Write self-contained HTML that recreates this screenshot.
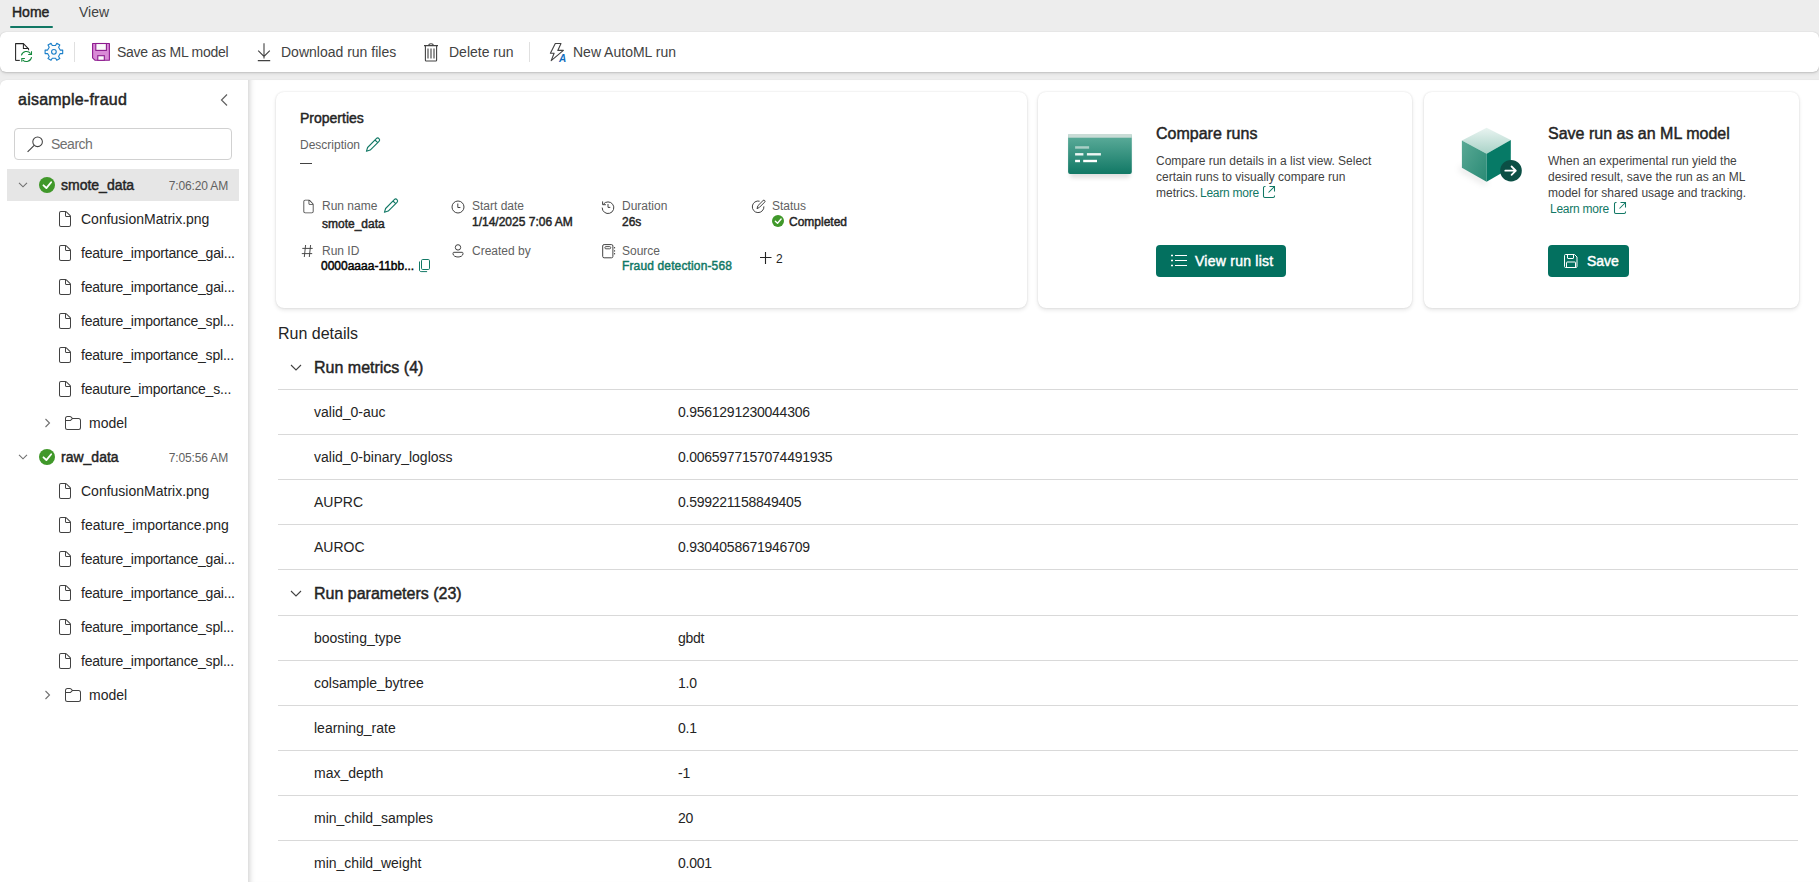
<!DOCTYPE html>
<html><head><meta charset="utf-8"><style>*{box-sizing:border-box;margin:0;padding:0}
html,body{width:1819px;height:882px;overflow:hidden}
body{background:#ededed;font-family:"Liberation Sans",sans-serif;color:#242424;position:relative}
.a{position:absolute;white-space:nowrap}
svg.a{overflow:visible}
#toolbar{position:absolute;left:0;top:32px;width:1819px;height:40px;background:#fff;border-radius:6px;box-shadow:0 0 1px rgba(0,0,0,.22),0 1px 2px rgba(0,0,0,.12),0 2px 4px rgba(0,0,0,.06)}
#panel{position:absolute;left:0;top:80px;width:1819px;height:802px;background:#fff;border-top-left-radius:6px;box-shadow:0 0 1px rgba(0,0,0,.16)}
#mainbg{position:absolute;left:248px;top:80px;width:1571px;height:802px;background:#fff;box-shadow:inset 7px 0 6px -6px rgba(0,0,0,.22)}
</style></head><body>
<div class="a" style="left:12px;top:5px;font-size:14px;line-height:14px;font-weight:normal;color:#242424;;-webkit-text-stroke:0.45px #242424">Home</div>
<div class="a" style="left:79px;top:5px;font-size:14px;line-height:14px;font-weight:normal;color:#424242;">View</div>
<div class="a" style="left:10px;top:26px;width:43px;height:2px;background:#117865;border-radius:1px"></div>
<div id="toolbar"></div>
<div class="a" style="left:117px;top:45px;font-size:14px;line-height:14px;font-weight:normal;color:#424242;letter-spacing:-0.25px">Save as ML model</div>
<div class="a" style="left:281px;top:45px;font-size:14px;line-height:14px;font-weight:normal;color:#424242;">Download run files</div>
<div class="a" style="left:449px;top:45px;font-size:14px;line-height:14px;font-weight:normal;color:#424242;">Delete run</div>
<div class="a" style="left:573px;top:45px;font-size:14px;line-height:14px;font-weight:normal;color:#424242;">New AutoML run</div>
<div class="a" style="left:74px;top:42px;width:1px;height:20px;background:#e0e0e0"></div>
<div class="a" style="left:529px;top:42px;width:1px;height:20px;background:#e0e0e0"></div>
<svg class="a" style="left:12px;top:40px" width="24" height="24" viewBox="0 0 24 24"><path d="M3.6 20.4V3.6h7.8l5.2 5.2v1.5" fill="none" stroke="#242424" stroke-width="1.05" stroke-linejoin="round"/><path d="M3.6 20.4h4.2" fill="none" stroke="#242424" stroke-width="1.05"/><path d="M11.4 3.6v4.8h5.2" fill="none" stroke="#242424" stroke-width="1.05" stroke-linejoin="round"/><path d="M9.4 15.4A5.2 5.2 0 0 1 18.6 13.6" fill="none" stroke="#14883c" stroke-width="1.05"/><path d="M19.5 11.2v3.3h-3.3" fill="none" stroke="#14883c" stroke-width="1.05"/><path d="M19.6 17.2A5.2 5.2 0 0 1 10.6 19.8" fill="none" stroke="#14883c" stroke-width="1.05"/><path d="M9.8 21.8v-3.3h3.1" fill="none" stroke="#14883c" stroke-width="1.05"/></svg>
<svg class="a" style="left:40px;top:40px" width="24" height="24" viewBox="0 0 24 24"><path d="M20.20 10.10 L22.70 10.10 L22.70 13.60 L20.20 13.60 L18.57 16.43 L19.82 18.60 L16.78 20.35 L15.53 18.18 L12.27 18.18 L11.02 20.35 L7.98 18.60 L9.23 16.43 L7.60 13.60 L5.10 13.60 L5.10 10.10 L7.60 10.10 L9.23 7.27 L7.98 5.10 L11.02 3.35 L12.27 5.52 L15.53 5.52 L16.78 3.35 L19.82 5.10 L18.57 7.27Z" fill="#fbfbfb" stroke="#1b7fc9" stroke-width="1.1" stroke-linejoin="round"/><circle cx="13.9" cy="11.85" r="2.35" fill="none" stroke="#1b7fc9" stroke-width="1.1"/></svg>
<svg class="a" style="left:88px;top:40px" width="24" height="24" viewBox="0 0 24 24"><path d="M4.6 3.5h16.8v16.8H7.1L4.6 17.8z" fill="#d98ad6" stroke="#8c1a8e" stroke-width="1.1" stroke-linejoin="round"/><rect x="7.8" y="3.5" width="10.6" height="6.9" fill="#fafafa" stroke="#8c1a8e" stroke-width="1.1"/><rect x="9.8" y="15.7" width="6.5" height="4.6" fill="#fafafa" stroke="#8c1a8e" stroke-width="1.1"/></svg>
<svg class="a" style="left:256px;top:42px" width="16" height="20" viewBox="0 0 16 20"><path d="M8 1.2v15.3M2.2 8.7l5.8 5.8 5.8-5.8M1.8 18.6h12.4" fill="none" stroke="#424242" stroke-width="1.1"/></svg>
<svg class="a" style="left:423px;top:42px" width="16" height="20" viewBox="0 0 16 20"><path d="M1 3.6h14M5.8 3.4c0-2.2 4.4-2.2 4.4 0M2.4 3.6v14.6c0 .5.3.8.8.8h9.6c.5 0 .8-.3.8-.8V3.6M5 6.5v10M8 6.5v10M11 6.5v10" fill="none" stroke="#424242" stroke-width="1.1"/></svg>
<svg class="a" style="left:548px;top:42px" width="20" height="22" viewBox="0 0 20 22"><path d="M7.3 1.5H13L9.8 8.4h5.6L3.2 18.6l2.9-7.3H2.4z" fill="none" stroke="#424242" stroke-width="1.1" stroke-linejoin="round"/><text x="11" y="20" font-family="Liberation Sans" font-weight="bold" font-style="italic" font-size="10" fill="#0f6cbd">A</text></svg>
<div id="panel"></div><div id="mainbg"></div>
<div class="a" style="left:18px;top:92px;font-size:16px;line-height:16px;font-weight:normal;color:#242424;;-webkit-text-stroke:0.45px #242424;letter-spacing:0.23px">aisample-fraud</div>
<svg class="a" style="left:218px;top:93px" width="12" height="14" viewBox="0 0 12 14"><path d="M9 1.5L3.5 7L9 12.5" fill="none" stroke="#616161" stroke-width="1.2"/></svg>
<div class="a" style="left:14px;top:128px;width:218px;height:32px;border:1px solid #d1d1d1;border-radius:4px;background:#fff"></div>
<svg class="a" style="left:26px;top:135px" width="18" height="18" viewBox="0 0 18 18"><circle cx="11.6" cy="6.8" r="4.8" fill="none" stroke="#424242" stroke-width="1.05"/><path d="M8.2 10.3L1.6 16.9" stroke="#424242" stroke-width="1.15"/></svg>
<div class="a" style="left:51px;top:137px;font-size:14px;line-height:14px;font-weight:normal;color:#707070;letter-spacing:-0.5px">Search</div>
<div class="a" style="left:7px;top:169px;width:232px;height:32px;background:#e6e6e6"></div>
<svg class="a" style="left:17px;top:181px" width="12" height="8" viewBox="0 0 12 8"><path d="M2 1.8L6 5.8L10 1.8" fill="none" stroke="#707070" stroke-width="1.1"/></svg>
<svg class="a" style="left:39px;top:177px" width="16" height="16" viewBox="0 0 16 16"><circle cx="8.0" cy="8.0" r="8.0" fill="#40982a"/><path d="M4.48 8.32l2.88 2.72 4.80-5.76" fill="none" stroke="#fff" stroke-width="1.84" stroke-linecap="round" stroke-linejoin="round"/></svg>
<div class="a" style="left:61px;top:178px;font-size:14px;line-height:14px;font-weight:normal;color:#242424;;-webkit-text-stroke:0.45px #242424">smote_data</div>
<div class="a" style="right:1591px;top:180px;font-size:12px;line-height:12px;color:#616161;letter-spacing:-0.15px">7:06:20 AM</div>
<svg class="a" style="left:55px;top:209px" width="20" height="20" viewBox="0 0 20 20"><path d="M6 2a2 2 0 0 0-2 2v12c0 1.1.9 2 2 2h8a2 2 0 0 0 2-2V7.41c0-.4-.16-.78-.44-1.06l-3.91-3.91A1.5 1.5 0 0 0 10.59 2H6ZM5 4a1 1 0 0 1 1-1h4v3.5c0 .83.67 1.5 1.5 1.5H15v8a1 1 0 0 1-1 1H6a1 1 0 0 1-1-1V4Zm9.8 3h-3.3a.5.5 0 0 1-.5-.5V3.2L14.8 7Z" fill="#424242"/></svg>
<div class="a" style="left:81px;top:212px;font-size:14px;line-height:14px;font-weight:normal;color:#242424;">ConfusionMatrix.png</div>
<svg class="a" style="left:55px;top:243px" width="20" height="20" viewBox="0 0 20 20"><path d="M6 2a2 2 0 0 0-2 2v12c0 1.1.9 2 2 2h8a2 2 0 0 0 2-2V7.41c0-.4-.16-.78-.44-1.06l-3.91-3.91A1.5 1.5 0 0 0 10.59 2H6ZM5 4a1 1 0 0 1 1-1h4v3.5c0 .83.67 1.5 1.5 1.5H15v8a1 1 0 0 1-1 1H6a1 1 0 0 1-1-1V4Zm9.8 3h-3.3a.5.5 0 0 1-.5-.5V3.2L14.8 7Z" fill="#424242"/></svg>
<div class="a" style="left:81px;top:246px;font-size:14px;line-height:14px;font-weight:normal;color:#242424;letter-spacing:-0.2px">feature_importance_gai...</div>
<svg class="a" style="left:55px;top:277px" width="20" height="20" viewBox="0 0 20 20"><path d="M6 2a2 2 0 0 0-2 2v12c0 1.1.9 2 2 2h8a2 2 0 0 0 2-2V7.41c0-.4-.16-.78-.44-1.06l-3.91-3.91A1.5 1.5 0 0 0 10.59 2H6ZM5 4a1 1 0 0 1 1-1h4v3.5c0 .83.67 1.5 1.5 1.5H15v8a1 1 0 0 1-1 1H6a1 1 0 0 1-1-1V4Zm9.8 3h-3.3a.5.5 0 0 1-.5-.5V3.2L14.8 7Z" fill="#424242"/></svg>
<div class="a" style="left:81px;top:280px;font-size:14px;line-height:14px;font-weight:normal;color:#242424;letter-spacing:-0.2px">feature_importance_gai...</div>
<svg class="a" style="left:55px;top:311px" width="20" height="20" viewBox="0 0 20 20"><path d="M6 2a2 2 0 0 0-2 2v12c0 1.1.9 2 2 2h8a2 2 0 0 0 2-2V7.41c0-.4-.16-.78-.44-1.06l-3.91-3.91A1.5 1.5 0 0 0 10.59 2H6ZM5 4a1 1 0 0 1 1-1h4v3.5c0 .83.67 1.5 1.5 1.5H15v8a1 1 0 0 1-1 1H6a1 1 0 0 1-1-1V4Zm9.8 3h-3.3a.5.5 0 0 1-.5-.5V3.2L14.8 7Z" fill="#424242"/></svg>
<div class="a" style="left:81px;top:314px;font-size:14px;line-height:14px;font-weight:normal;color:#242424;letter-spacing:-0.2px">feature_importance_spl...</div>
<svg class="a" style="left:55px;top:345px" width="20" height="20" viewBox="0 0 20 20"><path d="M6 2a2 2 0 0 0-2 2v12c0 1.1.9 2 2 2h8a2 2 0 0 0 2-2V7.41c0-.4-.16-.78-.44-1.06l-3.91-3.91A1.5 1.5 0 0 0 10.59 2H6ZM5 4a1 1 0 0 1 1-1h4v3.5c0 .83.67 1.5 1.5 1.5H15v8a1 1 0 0 1-1 1H6a1 1 0 0 1-1-1V4Zm9.8 3h-3.3a.5.5 0 0 1-.5-.5V3.2L14.8 7Z" fill="#424242"/></svg>
<div class="a" style="left:81px;top:348px;font-size:14px;line-height:14px;font-weight:normal;color:#242424;letter-spacing:-0.2px">feature_importance_spl...</div>
<svg class="a" style="left:55px;top:379px" width="20" height="20" viewBox="0 0 20 20"><path d="M6 2a2 2 0 0 0-2 2v12c0 1.1.9 2 2 2h8a2 2 0 0 0 2-2V7.41c0-.4-.16-.78-.44-1.06l-3.91-3.91A1.5 1.5 0 0 0 10.59 2H6ZM5 4a1 1 0 0 1 1-1h4v3.5c0 .83.67 1.5 1.5 1.5H15v8a1 1 0 0 1-1 1H6a1 1 0 0 1-1-1V4Zm9.8 3h-3.3a.5.5 0 0 1-.5-.5V3.2L14.8 7Z" fill="#424242"/></svg>
<div class="a" style="left:81px;top:382px;font-size:14px;line-height:14px;font-weight:normal;color:#242424;letter-spacing:-0.2px">feauture_importance_s...</div>
<svg class="a" style="left:42px;top:417px" width="8" height="12" viewBox="0 0 8 12"><path d="M3.5 2L7.5 6L3.5 10" fill="none" stroke="#707070" stroke-width="1.1"/></svg>
<svg class="a" style="left:63px;top:413px" width="20" height="20" viewBox="0 0 20 20"><path d="M4.5 3A2.5 2.5 0 0 0 2 5.5v9A2.5 2.5 0 0 0 4.5 17h11a2.5 2.5 0 0 0 2.5-2.5v-7A2.5 2.5 0 0 0 15.5 5H9.7L8.23 3.51A1.75 1.75 0 0 0 6.98 3H4.5ZM3 5.5C3 4.67 3.67 4 4.5 4h2.480c.2 0 .4.08.54.22L8.8 5.5 7.440 6.850a.75.75 0 0 1-.53.22H3V5.5Zm0 2.57h3.91c.47 0 .91-.18 1.24-.51L9.7 6h5.8c.83 0 1.5.67 1.5 1.5v7c0 .83-.67 1.5-1.5 1.5h-11A1.5 1.5 0 0 1 3 14.5V8.07Z" fill="#424242"/></svg>
<div class="a" style="left:89px;top:416px;font-size:14px;line-height:14px;font-weight:normal;color:#242424;">model</div>
<svg class="a" style="left:17px;top:453px" width="12" height="8" viewBox="0 0 12 8"><path d="M2 1.8L6 5.8L10 1.8" fill="none" stroke="#707070" stroke-width="1.1"/></svg>
<svg class="a" style="left:39px;top:449px" width="16" height="16" viewBox="0 0 16 16"><circle cx="8.0" cy="8.0" r="8.0" fill="#40982a"/><path d="M4.48 8.32l2.88 2.72 4.80-5.76" fill="none" stroke="#fff" stroke-width="1.84" stroke-linecap="round" stroke-linejoin="round"/></svg>
<div class="a" style="left:61px;top:450px;font-size:14px;line-height:14px;font-weight:normal;color:#242424;;-webkit-text-stroke:0.45px #242424">raw_data</div>
<div class="a" style="right:1591px;top:452px;font-size:12px;line-height:12px;color:#616161;letter-spacing:-0.15px">7:05:56 AM</div>
<svg class="a" style="left:55px;top:481px" width="20" height="20" viewBox="0 0 20 20"><path d="M6 2a2 2 0 0 0-2 2v12c0 1.1.9 2 2 2h8a2 2 0 0 0 2-2V7.41c0-.4-.16-.78-.44-1.06l-3.91-3.91A1.5 1.5 0 0 0 10.59 2H6ZM5 4a1 1 0 0 1 1-1h4v3.5c0 .83.67 1.5 1.5 1.5H15v8a1 1 0 0 1-1 1H6a1 1 0 0 1-1-1V4Zm9.8 3h-3.3a.5.5 0 0 1-.5-.5V3.2L14.8 7Z" fill="#424242"/></svg>
<div class="a" style="left:81px;top:484px;font-size:14px;line-height:14px;font-weight:normal;color:#242424;">ConfusionMatrix.png</div>
<svg class="a" style="left:55px;top:515px" width="20" height="20" viewBox="0 0 20 20"><path d="M6 2a2 2 0 0 0-2 2v12c0 1.1.9 2 2 2h8a2 2 0 0 0 2-2V7.41c0-.4-.16-.78-.44-1.06l-3.91-3.91A1.5 1.5 0 0 0 10.59 2H6ZM5 4a1 1 0 0 1 1-1h4v3.5c0 .83.67 1.5 1.5 1.5H15v8a1 1 0 0 1-1 1H6a1 1 0 0 1-1-1V4Zm9.8 3h-3.3a.5.5 0 0 1-.5-.5V3.2L14.8 7Z" fill="#424242"/></svg>
<div class="a" style="left:81px;top:518px;font-size:14px;line-height:14px;font-weight:normal;color:#242424;">feature_importance.png</div>
<svg class="a" style="left:55px;top:549px" width="20" height="20" viewBox="0 0 20 20"><path d="M6 2a2 2 0 0 0-2 2v12c0 1.1.9 2 2 2h8a2 2 0 0 0 2-2V7.41c0-.4-.16-.78-.44-1.06l-3.91-3.91A1.5 1.5 0 0 0 10.59 2H6ZM5 4a1 1 0 0 1 1-1h4v3.5c0 .83.67 1.5 1.5 1.5H15v8a1 1 0 0 1-1 1H6a1 1 0 0 1-1-1V4Zm9.8 3h-3.3a.5.5 0 0 1-.5-.5V3.2L14.8 7Z" fill="#424242"/></svg>
<div class="a" style="left:81px;top:552px;font-size:14px;line-height:14px;font-weight:normal;color:#242424;letter-spacing:-0.2px">feature_importance_gai...</div>
<svg class="a" style="left:55px;top:583px" width="20" height="20" viewBox="0 0 20 20"><path d="M6 2a2 2 0 0 0-2 2v12c0 1.1.9 2 2 2h8a2 2 0 0 0 2-2V7.41c0-.4-.16-.78-.44-1.06l-3.91-3.91A1.5 1.5 0 0 0 10.59 2H6ZM5 4a1 1 0 0 1 1-1h4v3.5c0 .83.67 1.5 1.5 1.5H15v8a1 1 0 0 1-1 1H6a1 1 0 0 1-1-1V4Zm9.8 3h-3.3a.5.5 0 0 1-.5-.5V3.2L14.8 7Z" fill="#424242"/></svg>
<div class="a" style="left:81px;top:586px;font-size:14px;line-height:14px;font-weight:normal;color:#242424;letter-spacing:-0.2px">feature_importance_gai...</div>
<svg class="a" style="left:55px;top:617px" width="20" height="20" viewBox="0 0 20 20"><path d="M6 2a2 2 0 0 0-2 2v12c0 1.1.9 2 2 2h8a2 2 0 0 0 2-2V7.41c0-.4-.16-.78-.44-1.06l-3.91-3.91A1.5 1.5 0 0 0 10.59 2H6ZM5 4a1 1 0 0 1 1-1h4v3.5c0 .83.67 1.5 1.5 1.5H15v8a1 1 0 0 1-1 1H6a1 1 0 0 1-1-1V4Zm9.8 3h-3.3a.5.5 0 0 1-.5-.5V3.2L14.8 7Z" fill="#424242"/></svg>
<div class="a" style="left:81px;top:620px;font-size:14px;line-height:14px;font-weight:normal;color:#242424;letter-spacing:-0.2px">feature_importance_spl...</div>
<svg class="a" style="left:55px;top:651px" width="20" height="20" viewBox="0 0 20 20"><path d="M6 2a2 2 0 0 0-2 2v12c0 1.1.9 2 2 2h8a2 2 0 0 0 2-2V7.41c0-.4-.16-.78-.44-1.06l-3.91-3.91A1.5 1.5 0 0 0 10.59 2H6ZM5 4a1 1 0 0 1 1-1h4v3.5c0 .83.67 1.5 1.5 1.5H15v8a1 1 0 0 1-1 1H6a1 1 0 0 1-1-1V4Zm9.8 3h-3.3a.5.5 0 0 1-.5-.5V3.2L14.8 7Z" fill="#424242"/></svg>
<div class="a" style="left:81px;top:654px;font-size:14px;line-height:14px;font-weight:normal;color:#242424;letter-spacing:-0.2px">feature_importance_spl...</div>
<svg class="a" style="left:42px;top:689px" width="8" height="12" viewBox="0 0 8 12"><path d="M3.5 2L7.5 6L3.5 10" fill="none" stroke="#707070" stroke-width="1.1"/></svg>
<svg class="a" style="left:63px;top:685px" width="20" height="20" viewBox="0 0 20 20"><path d="M4.5 3A2.5 2.5 0 0 0 2 5.5v9A2.5 2.5 0 0 0 4.5 17h11a2.5 2.5 0 0 0 2.5-2.5v-7A2.5 2.5 0 0 0 15.5 5H9.7L8.23 3.51A1.75 1.75 0 0 0 6.98 3H4.5ZM3 5.5C3 4.67 3.67 4 4.5 4h2.480c.2 0 .4.08.54.22L8.8 5.5 7.440 6.850a.75.75 0 0 1-.53.22H3V5.5Zm0 2.57h3.91c.47 0 .91-.18 1.24-.51L9.7 6h5.8c.83 0 1.5.67 1.5 1.5v7c0 .83-.67 1.5-1.5 1.5h-11A1.5 1.5 0 0 1 3 14.5V8.07Z" fill="#424242"/></svg>
<div class="a" style="left:89px;top:688px;font-size:14px;line-height:14px;font-weight:normal;color:#242424;">model</div>
<div class="a" style="left:276px;top:92px;width:751px;height:216px;background:#fff;border-radius:8px;box-shadow:0 0 2px rgba(0,0,0,.12),0 2px 4px rgba(0,0,0,.10)"></div>
<div class="a" style="left:1038px;top:92px;width:374px;height:216px;background:#fff;border-radius:8px;box-shadow:0 0 2px rgba(0,0,0,.12),0 2px 4px rgba(0,0,0,.10)"></div>
<div class="a" style="left:1424px;top:92px;width:375px;height:216px;background:#fff;border-radius:8px;box-shadow:0 0 2px rgba(0,0,0,.12),0 2px 4px rgba(0,0,0,.10)"></div>
<div class="a" style="left:300px;top:111px;font-size:14px;line-height:14px;font-weight:normal;color:#242424;;-webkit-text-stroke:0.45px #242424">Properties</div>
<div class="a" style="left:300px;top:139px;font-size:12px;line-height:12px;font-weight:normal;color:#616161;">Description</div>
<svg class="a" style="left:365px;top:137px" width="16" height="16" viewBox="0 0 16 16"><path d="M11.3 1.6a1.9 1.9 0 0 1 2.7 2.7L5.2 13.1 1.4 14.3l1.2-3.8z M10 3l2.7 2.7" fill="none" stroke="#117865" stroke-width="1.1" stroke-linejoin="round"/></svg>
<div class="a" style="left:300px;top:163px;width:12px;height:1px;background:#424242"></div>
<svg class="a" style="left:300px;top:198px" width="17" height="17" viewBox="0 0 20 20"><path d="M6 2a2 2 0 0 0-2 2v12c0 1.1.9 2 2 2h8a2 2 0 0 0 2-2V7.41c0-.4-.16-.78-.44-1.06l-3.91-3.91A1.5 1.5 0 0 0 10.59 2H6ZM5 4a1 1 0 0 1 1-1h4v3.5c0 .83.67 1.5 1.5 1.5H15v8a1 1 0 0 1-1 1H6a1 1 0 0 1-1-1V4Zm9.8 3h-3.3a.5.5 0 0 1-.5-.5V3.2L14.8 7Z" fill="#424242"/></svg>
<div class="a" style="left:322px;top:200px;font-size:12px;line-height:12px;font-weight:normal;color:#616161;">Run name</div>
<svg class="a" style="left:383px;top:198px" width="16" height="16" viewBox="0 0 16 16"><path d="M11.3 1.6a1.9 1.9 0 0 1 2.7 2.7L5.2 13.1 1.4 14.3l1.2-3.8z M10 3l2.7 2.7" fill="none" stroke="#117865" stroke-width="1.1" stroke-linejoin="round"/></svg>
<div class="a" style="left:322px;top:218px;font-size:12px;line-height:12px;font-weight:normal;color:#242424;;-webkit-text-stroke:0.45px #242424">smote_data</div>
<svg class="a" style="left:450px;top:199px" width="16" height="16" viewBox="0 0 16 16"><circle cx="8" cy="8" r="6" fill="none" stroke="#424242" stroke-width="1"/><path d="M7.8 4.5v4h2.6" fill="none" stroke="#424242" stroke-width="1"/></svg>
<div class="a" style="left:472px;top:200px;font-size:12px;line-height:12px;font-weight:normal;color:#616161;">Start date</div>
<div class="a" style="left:472px;top:216px;font-size:12px;line-height:12px;font-weight:normal;color:#242424;;-webkit-text-stroke:0.45px #242424">1/14/2025 7:06 AM</div>
<svg class="a" style="left:600px;top:199px" width="16" height="16" viewBox="0 0 16 16"><path d="M3.3 5.3A5.8 5.8 0 1 1 2.2 8.6" fill="none" stroke="#424242" stroke-width="1"/><path d="M2.6 2.4v3.3h3.3" fill="none" stroke="#424242" stroke-width="1"/><path d="M8 5v3.4h2.3" fill="none" stroke="#424242" stroke-width="1"/></svg>
<div class="a" style="left:622px;top:200px;font-size:12px;line-height:12px;font-weight:normal;color:#616161;">Duration</div>
<div class="a" style="left:622px;top:216px;font-size:12px;line-height:12px;font-weight:normal;color:#242424;;-webkit-text-stroke:0.45px #242424">26s</div>
<svg class="a" style="left:750px;top:198px" width="17" height="17" viewBox="0 0 17 17"><path d="M9.6 3.2A5.8 5.8 0 1 0 13.9 8.4" fill="none" stroke="#424242" stroke-width="1"/><path d="M7 10.7l0.9-3 5.2-5.2a1.1 1.1 0 0 1 1.6 1.6l-5.2 5.2z" fill="none" stroke="#424242" stroke-width="1" stroke-linejoin="round"/></svg>
<div class="a" style="left:772px;top:200px;font-size:12px;line-height:12px;font-weight:normal;color:#616161;">Status</div>
<svg class="a" style="left:772px;top:215px" width="12" height="12" viewBox="0 0 12 12"><circle cx="6.0" cy="6.0" r="6.0" fill="#40982a"/><path d="M3.36 6.24l2.16 2.04 3.60-4.32" fill="none" stroke="#fff" stroke-width="1.38" stroke-linecap="round" stroke-linejoin="round"/></svg>
<div class="a" style="left:789px;top:216px;font-size:12px;line-height:12px;font-weight:normal;color:#242424;;-webkit-text-stroke:0.45px #242424">Completed</div>
<svg class="a" style="left:299px;top:243px" width="16" height="16" viewBox="0 0 16 16"><path d="M6.6 2L5.3 14M11.6 2L10.3 14M3.3 5.4h10.4M2.8 10.6h10.4" fill="none" stroke="#424242" stroke-width="0.95"/></svg>
<div class="a" style="left:322px;top:245px;font-size:12px;line-height:12px;font-weight:normal;color:#616161;">Run ID</div>
<div class="a" style="left:321px;top:260px;font-size:12px;line-height:12px;font-weight:normal;color:#000;;-webkit-text-stroke:0.45px #000">0000aaaa-11bb...</div>
<svg class="a" style="left:418px;top:258px" width="14" height="15" viewBox="0 0 14 15"><rect x="3.5" y="1.5" width="8" height="10" rx="1.2" fill="none" stroke="#117865" stroke-width="1"/><path d="M1.5 3.5v8.5c0 1 .7 1.6 1.6 1.6h6" fill="none" stroke="#117865" stroke-width="1"/></svg>
<svg class="a" style="left:450px;top:243px" width="16" height="16" viewBox="0 0 16 16"><circle cx="8" cy="4.4" r="2.7" fill="none" stroke="#424242" stroke-width="1"/><path d="M3.8 9.3h8.4c.4 0 .8.4.8.8v.5c0 2.1-2.3 3.4-5 3.4s-5-1.3-5-3.4v-.5c0-.4.4-.8.8-.8z" fill="none" stroke="#424242" stroke-width="1"/></svg>
<div class="a" style="left:472px;top:245px;font-size:12px;line-height:12px;font-weight:normal;color:#616161;">Created by</div>
<svg class="a" style="left:600px;top:242px" width="16" height="16" viewBox="0 0 16 16"><rect x="2.7" y="2.6" width="10.2" height="13.2" rx="1.4" fill="none" stroke="#424242" stroke-width="1"/><rect x="4.9" y="4.6" width="5.8" height="2.2" rx="1" fill="none" stroke="#424242" stroke-width="0.9"/><path d="M14.6 5v1.4M14.6 8.2v1.4M14.6 11v1.4" stroke="#424242" stroke-width="1"/></svg>
<div class="a" style="left:622px;top:245px;font-size:12px;line-height:12px;font-weight:normal;color:#616161;">Source</div>
<div class="a" style="left:622px;top:260px;font-size:12px;line-height:12px;font-weight:normal;color:#117865;;-webkit-text-stroke:0.45px #117865;letter-spacing:0.14px">Fraud detection-568</div>
<svg class="a" style="left:759px;top:251px" width="14" height="14" viewBox="0 0 14 14"><path d="M6.5 1v12M1 6.5h11.5" stroke="#242424" stroke-width="1.1"/></svg>
<div class="a" style="left:776px;top:253px;font-size:12px;line-height:12px;font-weight:normal;color:#242424;">2</div>
<svg class="a" style="left:1064px;top:128px" width="72" height="56" viewBox="0 0 72 56"><defs><linearGradient id="g1" x1="0" y1="0" x2="0" y2="1"><stop offset="0" stop-color="#5fae9c"/><stop offset="1" stop-color="#117865"/></linearGradient><filter id="f1" x="-20%" y="-20%" width="140%" height="160%"><feGaussianBlur stdDeviation="2"/></filter></defs><rect x="6" y="10" width="60" height="40" rx="2" fill="#000" opacity=".12" filter="url(#f1)"/><rect x="4.1" y="6" width="63.7" height="40" rx="2" fill="url(#g1)"/><rect x="4.1" y="6" width="63.7" height="3.7" fill="#c9dcd6"/><rect x="11.1" y="18.2" width="14" height="2.5" fill="#a9cfc6"/><rect x="11.1" y="25.1" width="8.3" height="2.4" fill="#eef6f4"/><rect x="22.9" y="25.1" width="14" height="2.4" fill="#eef6f4"/><rect x="11.1" y="31.8" width="4.9" height="2.4" fill="#fff"/><rect x="19.2" y="31.8" width="13.8" height="2.4" fill="#fff"/></svg>
<div class="a" style="left:1156px;top:126px;font-size:16px;line-height:16px;font-weight:normal;color:#242424;;-webkit-text-stroke:0.45px #242424">Compare runs</div>
<div class="a" style="left:1156px;top:155px;font-size:12px;line-height:12px;font-weight:normal;color:#424242;">Compare run details in a list view. Select</div>
<div class="a" style="left:1156px;top:171px;font-size:12px;line-height:12px;font-weight:normal;color:#424242;">certain runs to visually compare run</div>
<div class="a" style="left:1156px;top:187px;font-size:12px;line-height:12px;font-weight:normal;color:#424242;">metrics.</div>
<div class="a" style="left:1200px;top:187px;font-size:12px;line-height:12px;font-weight:normal;color:#117865;letter-spacing:-0.25px">Learn more</div>
<svg class="a" style="left:1262px;top:185px" width="14" height="14" viewBox="0 0 14 14"><path d="M3.5 1.5H2.8c-.7 0-1.3.6-1.3 1.3v8.4c0 .7.6 1.3 1.3 1.3h8.4c.7 0 1.3-.6 1.3-1.3v-.7M7.5 1.5h5v5M12.5 1.5l-6 6" fill="none" stroke="#117865" stroke-width="1.05"/></svg>
<div class="a" style="left:1156px;top:245px;width:130px;height:32px;background:#03705f;border-radius:4px"></div>
<svg class="a" style="left:1170px;top:253px" width="18" height="16" viewBox="0 0 18 16"><path d="M5 2.5h12M5 7.5h12M5 12.5h12" stroke="#fff" stroke-width="1"/><path d="M1 2.5h2M1 7.5h2M1 12.5h2" stroke="#fff" stroke-width="1.4"/></svg>
<div class="a" style="left:1195px;top:254px;font-size:14px;line-height:14px;font-weight:normal;color:#fff;;-webkit-text-stroke:0.45px #fff;letter-spacing:0.25px">View run list</div>
<svg class="a" style="left:1452px;top:120px" width="80" height="70" viewBox="0 0 80 70"><defs><linearGradient id="g2" x1="0" y1="0" x2="0" y2="1"><stop offset="0" stop-color="#e9f4f1"/><stop offset="1" stop-color="#a9d2c7"/></linearGradient><linearGradient id="g3" x1="0" y1="0" x2="1" y2="1"><stop offset="0" stop-color="#5aa995"/><stop offset="1" stop-color="#2a8a75"/></linearGradient><filter id="f2" x="-50%" y="-50%" width="200%" height="200%"><feGaussianBlur stdDeviation="3"/></filter></defs><path d="M8 48l26.6 15" fill="none" stroke="#000" stroke-opacity=".10" stroke-width="5" filter="url(#f2)"/><path d="M9.9 20.5L34.6 7.8l24.2 12.3-24.2 13.6z" fill="url(#g2)"/><path d="M9.9 20.5l24.7 13.2v28.1L9.9 47.7z" fill="url(#g3)"/><path d="M58.8 20.1l-24.2 13.6v28.1l24.2-14.1z" fill="#067a66"/><circle cx="59" cy="50.7" r="10.8" fill="#0b4f45"/><path d="M53.3 50.7h10.5M59.6 46.5l4.2 4.2-4.2 4.2" fill="none" stroke="#fff" stroke-width="1.8" stroke-linecap="round" stroke-linejoin="round"/></svg>
<div class="a" style="left:1548px;top:126px;font-size:16px;line-height:16px;font-weight:normal;color:#242424;;-webkit-text-stroke:0.45px #242424">Save run as an ML model</div>
<div class="a" style="left:1548px;top:155px;font-size:12px;line-height:12px;font-weight:normal;color:#424242;">When an experimental run yield the</div>
<div class="a" style="left:1548px;top:171px;font-size:12px;line-height:12px;font-weight:normal;color:#424242;">desired result, save the run as an ML</div>
<div class="a" style="left:1548px;top:187px;font-size:12px;line-height:12px;font-weight:normal;color:#424242;">model for shared usage and tracking.</div>
<div class="a" style="left:1550px;top:203px;font-size:12px;line-height:12px;font-weight:normal;color:#117865;letter-spacing:-0.25px">Learn more</div>
<svg class="a" style="left:1613px;top:201px" width="14" height="14" viewBox="0 0 14 14"><path d="M3.5 1.5H2.8c-.7 0-1.3.6-1.3 1.3v8.4c0 .7.6 1.3 1.3 1.3h8.4c.7 0 1.3-.6 1.3-1.3v-.7M7.5 1.5h5v5M12.5 1.5l-6 6" fill="none" stroke="#117865" stroke-width="1.05"/></svg>
<div class="a" style="left:1548px;top:245px;width:81px;height:32px;background:#03705f;border-radius:4px"></div>
<svg class="a" style="left:1562px;top:252px" width="18" height="18" viewBox="0 0 18 18"><path d="M3.5 2.5h9l2.5 2.5v9.5c0 .6-.4 1-1 1h-10.5c-.6 0-1-.4-1-1v-11c0-.6.4-1 1-1z M5.5 2.5v3.5c0 .3.2.5.5.5h5c.3 0 .5-.2.5-.5v-3.5 M4.5 15.5v-5c0-.3.2-.5.5-.5h8c.3 0 .5.2.5.5v5" fill="none" stroke="#fff" stroke-width="1"/></svg>
<div class="a" style="left:1587px;top:254px;font-size:14px;line-height:14px;font-weight:normal;color:#fff;;-webkit-text-stroke:0.45px #fff">Save</div>
<div class="a" style="left:278px;top:326px;font-size:16px;line-height:16px;font-weight:normal;color:#242424;">Run details</div>
<svg class="a" style="left:288px;top:363px" width="16" height="10" viewBox="0 0 16 10"><path d="M3 2l5 5 5-5" fill="none" stroke="#424242" stroke-width="1.1"/></svg>
<div class="a" style="left:314px;top:360px;font-size:16px;line-height:16px;font-weight:normal;color:#242424;;-webkit-text-stroke:0.45px #242424">Run metrics (4)</div>
<div class="a" style="left:278px;top:389px;width:1520px;height:1px;background:#d9d9d9"></div>
<div class="a" style="left:314px;top:405px;font-size:14px;line-height:14px;font-weight:normal;color:#242424;">valid_0-auc</div>
<div class="a" style="left:678px;top:405px;font-size:14px;line-height:14px;font-weight:normal;color:#242424;letter-spacing:-0.25px">0.9561291230044306</div>
<div class="a" style="left:278px;top:434px;width:1520px;height:1px;background:#d9d9d9"></div>
<div class="a" style="left:314px;top:450px;font-size:14px;line-height:14px;font-weight:normal;color:#242424;">valid_0-binary_logloss</div>
<div class="a" style="left:678px;top:450px;font-size:14px;line-height:14px;font-weight:normal;color:#242424;letter-spacing:-0.25px">0.0065977157074491935</div>
<div class="a" style="left:278px;top:479px;width:1520px;height:1px;background:#d9d9d9"></div>
<div class="a" style="left:314px;top:495px;font-size:14px;line-height:14px;font-weight:normal;color:#242424;">AUPRC</div>
<div class="a" style="left:678px;top:495px;font-size:14px;line-height:14px;font-weight:normal;color:#242424;letter-spacing:-0.25px">0.599221158849405</div>
<div class="a" style="left:278px;top:524px;width:1520px;height:1px;background:#d9d9d9"></div>
<div class="a" style="left:314px;top:540px;font-size:14px;line-height:14px;font-weight:normal;color:#242424;">AUROC</div>
<div class="a" style="left:678px;top:540px;font-size:14px;line-height:14px;font-weight:normal;color:#242424;letter-spacing:-0.25px">0.9304058671946709</div>
<div class="a" style="left:278px;top:569px;width:1520px;height:1px;background:#d9d9d9"></div>
<svg class="a" style="left:288px;top:589px" width="16" height="10" viewBox="0 0 16 10"><path d="M3 2l5 5 5-5" fill="none" stroke="#424242" stroke-width="1.1"/></svg>
<div class="a" style="left:314px;top:586px;font-size:16px;line-height:16px;font-weight:normal;color:#242424;;-webkit-text-stroke:0.45px #242424">Run parameters (23)</div>
<div class="a" style="left:278px;top:615px;width:1520px;height:1px;background:#d9d9d9"></div>
<div class="a" style="left:314px;top:631px;font-size:14px;line-height:14px;font-weight:normal;color:#242424;">boosting_type</div>
<div class="a" style="left:678px;top:631px;font-size:14px;line-height:14px;font-weight:normal;color:#242424;letter-spacing:-0.25px">gbdt</div>
<div class="a" style="left:278px;top:660px;width:1520px;height:1px;background:#d9d9d9"></div>
<div class="a" style="left:314px;top:676px;font-size:14px;line-height:14px;font-weight:normal;color:#242424;">colsample_bytree</div>
<div class="a" style="left:678px;top:676px;font-size:14px;line-height:14px;font-weight:normal;color:#242424;letter-spacing:-0.25px">1.0</div>
<div class="a" style="left:278px;top:705px;width:1520px;height:1px;background:#d9d9d9"></div>
<div class="a" style="left:314px;top:721px;font-size:14px;line-height:14px;font-weight:normal;color:#242424;">learning_rate</div>
<div class="a" style="left:678px;top:721px;font-size:14px;line-height:14px;font-weight:normal;color:#242424;letter-spacing:-0.25px">0.1</div>
<div class="a" style="left:278px;top:750px;width:1520px;height:1px;background:#d9d9d9"></div>
<div class="a" style="left:314px;top:766px;font-size:14px;line-height:14px;font-weight:normal;color:#242424;">max_depth</div>
<div class="a" style="left:678px;top:766px;font-size:14px;line-height:14px;font-weight:normal;color:#242424;letter-spacing:-0.25px">-1</div>
<div class="a" style="left:278px;top:795px;width:1520px;height:1px;background:#d9d9d9"></div>
<div class="a" style="left:314px;top:811px;font-size:14px;line-height:14px;font-weight:normal;color:#242424;">min_child_samples</div>
<div class="a" style="left:678px;top:811px;font-size:14px;line-height:14px;font-weight:normal;color:#242424;letter-spacing:-0.25px">20</div>
<div class="a" style="left:278px;top:840px;width:1520px;height:1px;background:#d9d9d9"></div>
<div class="a" style="left:314px;top:856px;font-size:14px;line-height:14px;font-weight:normal;color:#242424;">min_child_weight</div>
<div class="a" style="left:678px;top:856px;font-size:14px;line-height:14px;font-weight:normal;color:#242424;letter-spacing:-0.25px">0.001</div>
<div class="a" style="left:278px;top:885px;width:1520px;height:1px;background:#d9d9d9"></div>
</body></html>
